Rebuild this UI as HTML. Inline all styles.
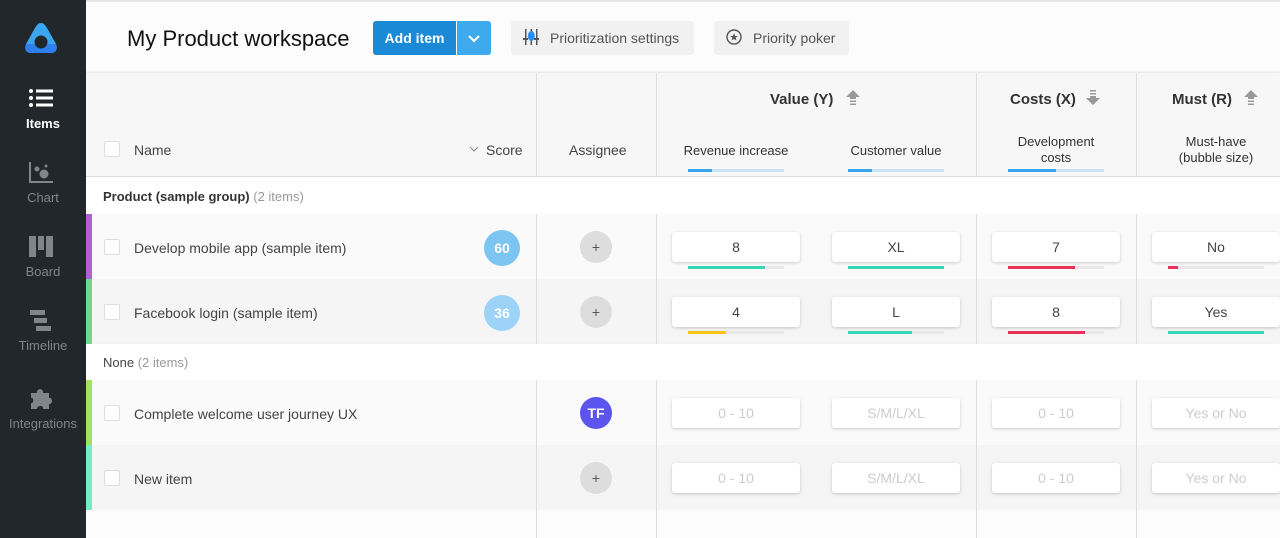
<!DOCTYPE html>
<html><head><meta charset="utf-8"><style>
*{box-sizing:border-box;margin:0;padding:0}
body{width:1280px;height:538px;overflow:hidden;position:relative;font-family:"Liberation Sans",sans-serif;background:#fcfcfc;color:#333}
.a{position:absolute}
.side{left:0;top:0;width:86px;height:538px;background:#22272c}
.nav{width:86px;text-align:center;font-size:13px;color:#80858a}
.cb{width:16px;height:16px;border:1px solid #ddd;background:#fff;border-radius:2px}
.inp{width:128px;height:30px;background:#fff;border-radius:3px;box-shadow:0 1px 3px rgba(0,0,0,.2);text-align:center;line-height:30px;font-size:14px;color:#444}
.ph{color:#ccc}
.trk{width:96px;height:3px;background:#e8e8e8}
.trk i{display:block;height:3px}
.vl{width:1px;background:#ddd}
.plus{width:32px;height:32px;border-radius:50%;background:#ddd;text-align:center;line-height:32px;font-size:14px;color:#555}
.hd{font-size:13px;color:#333;text-align:center}
</style></head><body>
<div class="a" style="left:86px;top:0;width:1194px;height:2px;background:#e6e6e6"></div>
<div class="a side"></div>
<svg class="a" style="left:23px;top:21px" width="36" height="33" viewBox="0 0 36 33"><path d="M18 2 C15 2 14 4 12 7 L3 23 C1 28 3 32 8 32 L28 32 C33 32 35 28 33 23 L24 7 C22 4 21 2 18 2Z" fill="#3aa6f0"/><path d="M3 23 C1 28 3 32 8 32 L28 32 C33 32 35 28 33 23 Z" fill="#2e7ff0"/><circle cx="18" cy="21" r="6.5" fill="#22272c"/></svg>
<svg class="a" style="left:28px;top:88px" width="26" height="20"><g fill="#fff"><circle cx="3" cy="3" r="2"/><circle cx="3" cy="10" r="2"/><circle cx="3" cy="17" r="2"/><rect x="8" y="1.5" width="17" height="3"/><rect x="8" y="8.5" width="17" height="3"/><rect x="8" y="15.5" width="17" height="3"/></g></svg>
<div class="a nav" style="top:116px;color:#fff;font-weight:bold">Items</div>
<svg class="a" style="left:28px;top:162px" width="26" height="22"><g fill="#80858a"><rect x="1" y="0" width="2" height="21"/><rect x="1" y="19" width="24" height="2"/><circle cx="9" cy="7" r="2.5"/><circle cx="16" cy="12" r="4.5"/><circle cx="18" cy="4" r="1.5"/></g></svg>
<div class="a nav" style="top:190px">Chart</div>
<svg class="a" style="left:28px;top:236px" width="26" height="22"><g fill="#80858a"><rect x="1" y="0" width="7" height="21"/><rect x="10" y="0" width="6" height="14"/><rect x="18" y="0" width="7" height="21"/></g></svg>
<div class="a nav" style="top:264px">Board</div>
<svg class="a" style="left:28px;top:310px" width="26" height="22"><g fill="#80858a"><rect x="2" y="0" width="15" height="5"/><rect x="6" y="8" width="13" height="5"/><rect x="8" y="16" width="15" height="5"/></g></svg>
<div class="a nav" style="top:338px">Timeline</div>
<svg class="a" style="left:29px;top:385px" width="26" height="26"><path fill="#80858a" d="M2 8 H8 C7 3 15 3 14 8 H20 V13 C24 12 24 20 20 19 V24 H14 C15 20 8 20 8 24 H2 V18 C5 19 5 12 2 13Z"/></svg>
<div class="a nav" style="top:416px">Integrations</div>

<div class="a" style="left:127px;top:26px;font-size:22px;color:#111">My Product workspace</div>
<div class="a" style="left:373px;top:21px;width:83px;height:34px;background:#1a8ad6;border-radius:3px 0 0 3px;color:#fff;font-size:14px;font-weight:bold;line-height:34px;text-align:center">Add item</div>
<div class="a" style="left:457px;top:21px;width:34px;height:34px;background:#3fa9ee;border-radius:0 3px 3px 0"><svg width="34" height="34"><path d="M12 15 L17 20 L22 15" stroke="#fff" stroke-width="2" fill="none"/></svg></div>
<div class="a" style="left:511px;top:21px;width:183px;height:34px;background:#f1f1f1;border-radius:3px;font-size:14px;color:#555;line-height:34px;padding-left:39px">Prioritization settings</div>
<svg class="a" style="left:523px;top:29px" width="16" height="16"><g fill="#555"><rect x="2" y="0" width="1.5" height="16"/><rect x="7.5" y="0" width="1.5" height="16"/><rect x="13" y="0" width="1.5" height="16"/><rect x="0" y="9" width="5" height="2"/><rect x="11" y="9" width="5" height="2"/></g><ellipse cx="8.3" cy="7" rx="3.5" ry="5" fill="#2e8ef0"/></svg>
<div class="a" style="left:714px;top:21px;width:135px;height:34px;background:#f1f1f1;border-radius:3px;font-size:14px;color:#555;line-height:34px;padding-left:39px">Priority poker</div>
<svg class="a" style="left:726px;top:29px" width="16" height="16"><circle cx="8" cy="8" r="7" stroke="#555" stroke-width="1.4" fill="none"/><path d="M8 4.2 L9.1 7 L11.8 7.1 L9.7 8.8 L10.4 11.5 L8 10 L5.6 11.5 L6.3 8.8 L4.2 7.1 L6.9 7Z" fill="#555"/></svg>

<div class="a" style="left:86px;top:73px;width:1194px;height:104px;background:#f7f7f7;border-bottom:1px solid #ddd;box-shadow:0 -1px 3px rgba(0,0,0,.1)"></div>
<div class="a" style="left:86px;top:177px;width:1194px;height:37px;background:#fff"></div>
<div class="a" style="left:86px;top:214px;width:1194px;height:65px;background:#fafafa"></div>
<div class="a" style="left:86px;top:279px;width:1194px;height:65px;background:#f5f5f5"></div>
<div class="a" style="left:86px;top:344px;width:1194px;height:36px;background:#fff;box-shadow:0 1px 3px rgba(0,0,0,.06)"></div>
<div class="a" style="left:86px;top:380px;width:1194px;height:65px;background:#fafafa"></div>
<div class="a" style="left:86px;top:445px;width:1194px;height:65px;background:#f5f5f5"></div>
<div class="a" style="left:86px;top:214px;width:6px;height:65px;background:#b35fd0"></div>
<div class="a" style="left:86px;top:279px;width:6px;height:65px;background:#6ed88e"></div>
<div class="a" style="left:86px;top:380px;width:6px;height:65px;background:#a1e35d"></div>
<div class="a" style="left:86px;top:445px;width:6px;height:65px;background:#74ecc4"></div>

<div class="a vl" style="left:536px;top:73px;height:104px"></div><div class="a vl" style="left:536px;top:214px;height:130px"></div><div class="a vl" style="left:536px;top:380px;height:158px"></div>
<div class="a vl" style="left:656px;top:73px;height:104px"></div><div class="a vl" style="left:656px;top:214px;height:130px"></div><div class="a vl" style="left:656px;top:380px;height:158px"></div>
<div class="a vl" style="left:976px;top:73px;height:104px"></div><div class="a vl" style="left:976px;top:214px;height:130px"></div><div class="a vl" style="left:976px;top:380px;height:158px"></div>
<div class="a vl" style="left:1136px;top:73px;height:104px"></div><div class="a vl" style="left:1136px;top:214px;height:130px"></div><div class="a vl" style="left:1136px;top:380px;height:158px"></div>

<div class="a cb" style="left:104px;top:141px"></div>
<div class="a" style="left:134px;top:142px;font-size:14px;color:#444">Name</div>
<svg class="a" style="left:469px;top:145px" width="10" height="8"><path d="M1 2 L5 6 L9 2" stroke="#888" fill="none"/></svg>
<div class="a" style="left:486px;top:142px;font-size:14px;color:#444">Score</div>
<div class="a" style="left:569px;top:142px;font-size:14px;color:#444">Assignee</div>
<div class="a" style="left:770px;top:91px;font-size:15px;font-weight:bold;color:#333">Value (Y)</div>
<svg class="a" style="left:846px;top:90px" width="14" height="16"><path d="M7 0 L14 7 H10 V9 H4 V7 H0Z M4 10.5 H10 V12 H4Z M4 13.5 H10 V15 H4Z" fill="#999"/></svg>
<div class="a" style="left:1010px;top:91px;font-size:15px;font-weight:bold;color:#333">Costs (X)</div>
<svg class="a" style="left:1086px;top:90px" width="14" height="16"><path d="M4 0 H10 V1.5 H4Z M4 3 H10 V4.5 H4Z M4 6 H10 V8 H14 L7 15 L0 8 H4Z" fill="#999"/></svg>
<div class="a" style="left:1172px;top:91px;font-size:15px;font-weight:bold;color:#333">Must (R)</div>
<svg class="a" style="left:1244px;top:90px" width="14" height="16"><path d="M7 0 L14 7 H10 V9 H4 V7 H0Z M4 10.5 H10 V12 H4Z M4 13.5 H10 V15 H4Z" fill="#999"/></svg>
<div class="a hd" style="left:672px;top:143px;width:128px">Revenue increase</div>
<div class="a hd" style="left:832px;top:143px;width:128px">Customer value</div>
<div class="a hd" style="left:992px;top:134px;width:128px;line-height:16px">Development<br>costs</div>
<div class="a hd" style="left:1152px;top:134px;width:128px;line-height:16px">Must-have<br>(bubble size)</div>
<div class="a trk" style="left:688px;top:169px;background:#cce4f8"><i style="width:24px;background:#3aa6f0"></i></div>
<div class="a trk" style="left:848px;top:169px;background:#cce4f8"><i style="width:24px;background:#3aa6f0"></i></div>
<div class="a trk" style="left:1008px;top:169px;background:#cce4f8"><i style="width:48px;background:#3aa6f0"></i></div>

<div class="a" style="left:103px;top:189px;font-size:13px"><b style="color:#333">Product (sample group)</b> <span style="color:#999">(2 items)</span></div>
<div class="a" style="left:103px;top:355px;font-size:13px;color:#444">None <span style="color:#999">(2 items)</span></div>

<div class="a cb" style="left:104px;top:239px"></div><div class="a" style="left:134px;top:240px;font-size:14px;color:#444">Develop mobile app (sample item)</div>
<div class="a cb" style="left:104px;top:304px"></div><div class="a" style="left:134px;top:305px;font-size:14px;color:#444">Facebook login (sample item)</div>
<div class="a cb" style="left:104px;top:405px"></div><div class="a" style="left:134px;top:406px;font-size:14px;color:#444">Complete welcome user journey UX</div>
<div class="a cb" style="left:104px;top:470px"></div><div class="a" style="left:134px;top:471px;font-size:14px;color:#444">New item</div>

<div class="a" style="left:484px;top:230px;width:36px;height:36px;border-radius:50%;background:#7cc4f2;color:#fff;font-weight:bold;font-size:14px;text-align:center;line-height:36px">60</div>
<div class="a" style="left:484px;top:295px;width:36px;height:36px;border-radius:50%;background:#9cd3f6;color:#fff;font-weight:bold;font-size:14px;text-align:center;line-height:36px">36</div>
<div class="a plus" style="left:580px;top:231px">+</div>
<div class="a plus" style="left:580px;top:296px">+</div>
<div class="a" style="left:580px;top:397px;width:32px;height:32px;border-radius:50%;background:#5b55ee;color:#fff;font-weight:bold;font-size:14px;text-align:center;line-height:32px">TF</div>
<div class="a plus" style="left:580px;top:462px">+</div>

<div class="a inp" style="left:672px;top:232px">8</div><div class="a inp" style="left:832px;top:232px">XL</div><div class="a inp" style="left:992px;top:232px">7</div><div class="a inp" style="left:1152px;top:232px">No</div>
<div class="a trk" style="left:688px;top:266px"><i style="width:77px;background:#37d6b4"></i></div>
<div class="a trk" style="left:848px;top:266px"><i style="width:96px;background:#37d6b4"></i></div>
<div class="a trk" style="left:1008px;top:266px"><i style="width:67px;background:#e8325a"></i></div>
<div class="a trk" style="left:1168px;top:266px"><i style="width:10px;background:#e8325a"></i></div>
<div class="a inp" style="left:672px;top:297px">4</div><div class="a inp" style="left:832px;top:297px">L</div><div class="a inp" style="left:992px;top:297px">8</div><div class="a inp" style="left:1152px;top:297px">Yes</div>
<div class="a trk" style="left:688px;top:331px"><i style="width:38px;background:#f5c518"></i></div>
<div class="a trk" style="left:848px;top:331px"><i style="width:64px;background:#37d6b4"></i></div>
<div class="a trk" style="left:1008px;top:331px"><i style="width:77px;background:#e8325a"></i></div>
<div class="a trk" style="left:1168px;top:331px"><i style="width:96px;background:#37d6b4"></i></div>
<div class="a inp ph" style="left:672px;top:398px">0 - 10</div><div class="a inp ph" style="left:832px;top:398px">S/M/L/XL</div><div class="a inp ph" style="left:992px;top:398px">0 - 10</div><div class="a inp ph" style="left:1152px;top:398px">Yes or No</div>
<div class="a inp ph" style="left:672px;top:463px">0 - 10</div><div class="a inp ph" style="left:832px;top:463px">S/M/L/XL</div><div class="a inp ph" style="left:992px;top:463px">0 - 10</div><div class="a inp ph" style="left:1152px;top:463px">Yes or No</div>
</body></html>
